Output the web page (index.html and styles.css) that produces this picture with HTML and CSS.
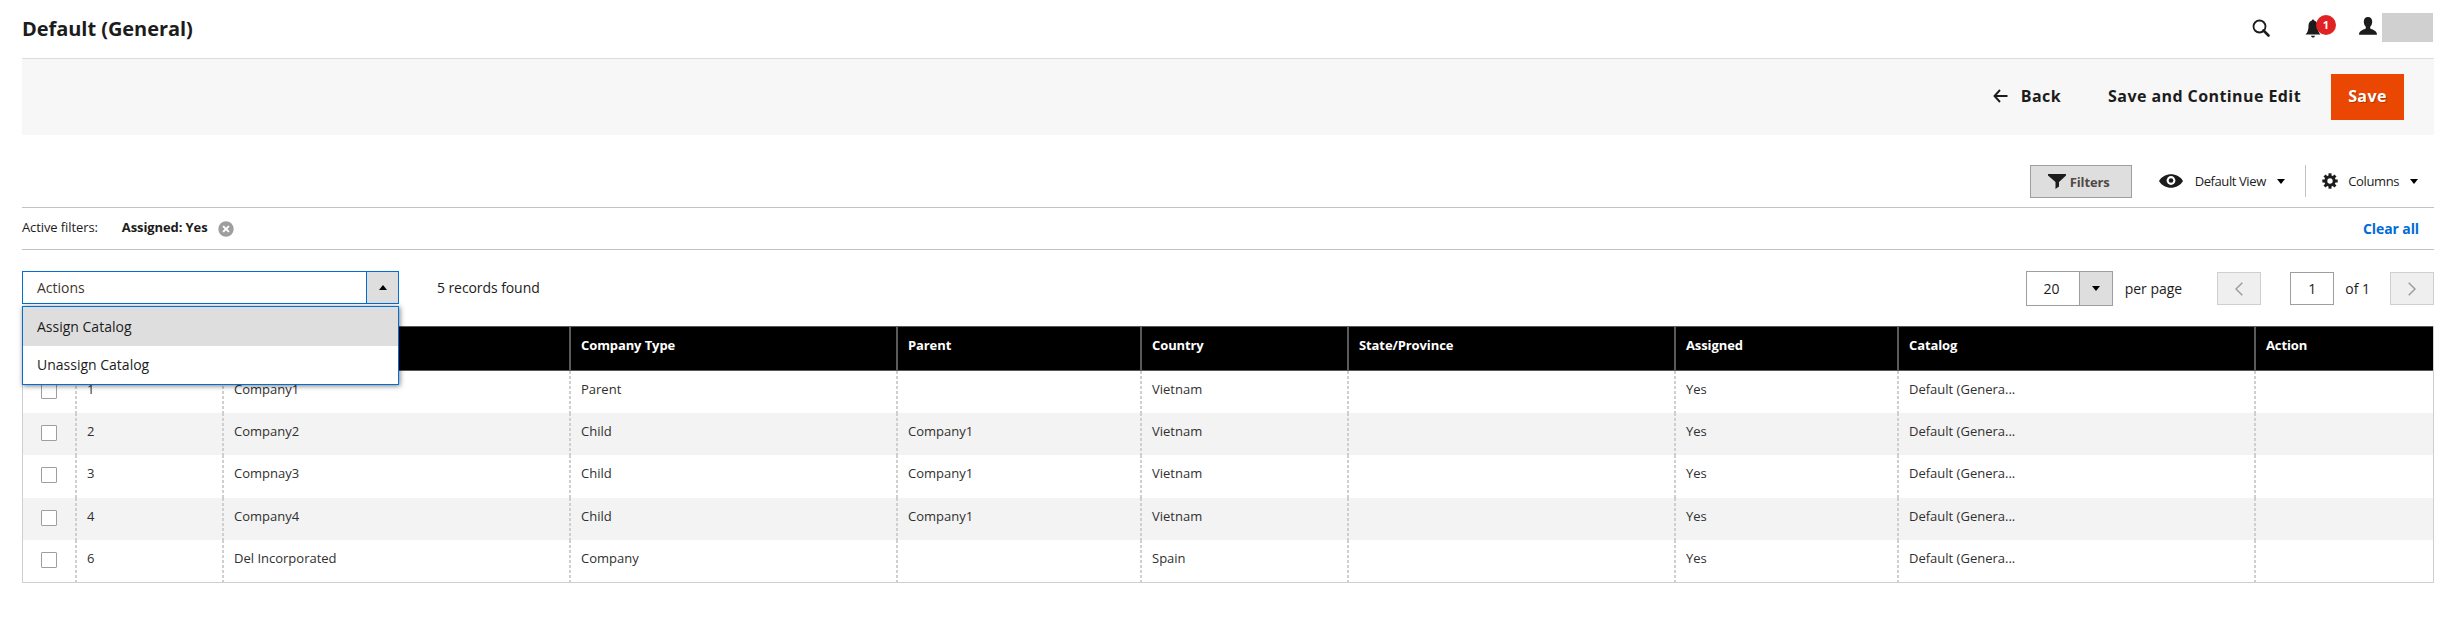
FILE: index.html
```html
<!DOCTYPE html>
<html lang="en">
<head>
<meta charset="utf-8">
<title>Default (General)</title>
<link rel="stylesheet" href="styles.css">
</head>
<body>
<header class="header">
  <h1 class="title">Default (General)</h1>
  <div class="tools">
    <svg class="search" width="18" height="18" viewBox="0 0 18 18"><circle cx="7.5" cy="7.5" r="6" fill="none" stroke="#1c1c1c" stroke-width="1.8"/><path d="M11.5 11.5l5 5" stroke="#1c1c1c" stroke-width="2.6" stroke-linecap="round"/></svg>
    <div class="bell">
      <svg width="16" height="19" viewBox="0 0 16 19"><path d="M8 0.5c.7 0 1.1.5 1.1 1.1C11.500 2.300 12.500 4.300 12.500 7c0 4 1 6.500 3 8.500H.5c2-2 3-4.500 3-8.500 0-2.700 1-4.700 3.400-5.400C6.900 1 7.300.5 8 .5zM6 16.700h4c-.2 1.200-1 1.800-2 1.800s-1.800-.6-2-1.800z" fill="#1c1c1c"/></svg>
      <span class="badge">1</span>
    </div>
    <svg class="user" width="18" height="18" viewBox="0 0 18 18"><path d="M9 0c2.700 0 4.200 1.900 4.200 4.600 0 2.200-.7 4-2 5.200v1.800c1 .8 6.800 1.600 6.800 6.100H0c0-4.500 5.800-5.300 6.800-6.100V9.800c-1.300-1.200-2-3-2-5.200C4.800 1.900 6.300 0 9 0z" fill="#1c1c1c"/></svg>
    <span class="account"></span>
  </div>
</header>
<section class="page-actions">
  <a class="back"><svg width="15" height="14" viewBox="0 0 15 14"><path d="M14.500 7H1.500M7 1L1.500 7 7 13" fill="none" stroke="#1c1c1c" stroke-width="1.900"/></svg>Back</a>
  <a class="continue">Save and Continue Edit</a>
  <button class="save">Save</button>
</section>
<section class="grid-tools">
  <button class="filters"><svg width="18" height="15" viewBox="0 0 18 15"><path d="M0 0h18v1.500L11 8v4.500L7.500 15V8L0 1.500z" fill="#1c1c1c"/></svg>Filters</button>
  <div class="view"><svg width="24" height="14" viewBox="0 0 24 14"><path d="M0 7C5-2 19-2 24 7 19 16 5 16 0 7z" fill="#1c1c1c"/><circle cx="12" cy="6.500" r="4.400" fill="#fff"/><circle cx="12" cy="6.500" r="2.300" fill="#1c1c1c"/></svg><span>Default View</span><i class="caret"></i></div>
  <div class="columns"><svg width="16" height="16" viewBox="-8 -8 16 16"><g fill="#1c1c1c"><path id="t" d="M-1.500-7.700h3v15.400h-3z"/><use href="#t" transform="rotate(45)"/><use href="#t" transform="rotate(90)"/><use href="#t" transform="rotate(135)"/><circle r="5.700"/></g><circle r="2.700" fill="#fff"/></svg><span>Columns</span><i class="caret"></i></div>
</section>
<section class="active-filters">
  <span class="label">Active filters:</span><b>Assigned: Yes</b>
  <svg width="16" height="16" viewBox="0 0 16 16"><circle cx="8" cy="8" r="7.700" fill="#9e9e9e"/><path d="M5.100 5.100l5.800 5.800M10.900 5.100l-5.800 5.800" stroke="#fff" stroke-width="2"/></svg>
  <a class="clear">Clear all</a>
</section>
<section class="controls">
  <div class="actions">
    <div class="select"><span>Actions</span><div class="toggle"><i class="caret up"></i></div></div>
    <ul class="menu"><li class="hover">Assign Catalog</li><li>Unassign Catalog</li></ul>
  </div>
  <span class="records">5 records found</span>
  <div class="pager">
    <div class="limit"><span>20</span><div class="limit-toggle"><i class="caret"></i></div></div>
    <span class="per">per page</span>
    <button class="nav"><svg width="8" height="14" viewBox="0 0 8 14"><path d="M7.300 .7L1 7l6.300 6.300" fill="none" stroke="#9a9a9a" stroke-width="1.400"/></svg></button>
    <div class="page">1</div><span class="of">of 1</span>
    <button class="nav"><svg width="8" height="14" viewBox="0 0 8 14"><path d="M.7 .7L7 7 .7 13.300" fill="none" stroke="#9a9a9a" stroke-width="1.400"/></svg></button>
  </div>
</section>
<table class="data">
  <colgroup><col class="c1"><col class="c2"><col class="c3"><col class="c4"><col class="c5"><col class="c6"><col class="c7"><col class="c8"><col class="c9"><col class="c10"></colgroup>
  <thead><tr><th></th><th></th><th></th><th>Company Type</th><th>Parent</th><th>Country</th><th>State/Province</th><th>Assigned</th><th>Catalog</th><th>Action</th></tr></thead>
  <tbody>
    <tr><td><i class="check"></i></td><td>1</td><td>Company1</td><td>Parent</td><td></td><td>Vietnam</td><td></td><td>Yes</td><td>Default (Genera...</td><td></td></tr>
    <tr><td><i class="check"></i></td><td>2</td><td>Company2</td><td>Child</td><td>Company1</td><td>Vietnam</td><td></td><td>Yes</td><td>Default (Genera...</td><td></td></tr>
    <tr class="tall"><td><i class="check"></i></td><td>3</td><td>Compnay3</td><td>Child</td><td>Company1</td><td>Vietnam</td><td></td><td>Yes</td><td>Default (Genera...</td><td></td></tr>
    <tr><td><i class="check"></i></td><td>4</td><td>Company4</td><td>Child</td><td>Company1</td><td>Vietnam</td><td></td><td>Yes</td><td>Default (Genera...</td><td></td></tr>
    <tr><td><i class="check"></i></td><td>6</td><td>Del Incorporated</td><td>Company</td><td></td><td>Spain</td><td></td><td>Yes</td><td>Default (Genera...</td><td></td></tr>
  </tbody>
</table>
</body>
</html>
```
FILE: styles.css
```css
* { box-sizing: border-box; }
body { margin: 0; padding: 0 19px 0 22px; height: 618px; background: #fff; color: #1c1c1c; font-family: "Open Sans", "Noto Sans", sans-serif; font-size: 14px; overflow: hidden; }
svg { display: block; flex: none; }
button { font: inherit; border-radius: 0; padding: 0; margin: 0; }
.header { height: 59px; border-bottom: 1px solid #dcdcdc; display: flex; justify-content: space-between; }
.title { margin: 0; font-size: 20px; font-weight: 700; letter-spacing: -.05px; line-height: 58px; }
.tools { display: flex; align-items: flex-start; padding-right: 1px; }
.search { margin: 19px 35px 0 0; }
.bell { position: relative; margin: 19px 38px 0 0; }
.badge { position: absolute; left: 11px; top: -4px; width: 20px; height: 20px; border-radius: 50%; background: #e02222; color: #fff; font-size: 11px; font-weight: 700; line-height: 20px; text-align: center; }
.user { margin: 17px 5px 0 0; }
.account { width: 51px; height: 29px; margin-top: 13px; background: #d0d0d0; }
.page-actions { height: 76px; background: #f7f7f7; display: flex; justify-content: flex-end; align-items: center; padding-right: 30px; font-size: 16px; font-weight: 700; letter-spacing: .42px; line-height: 22px; }
.back { display: flex; align-items: center; gap: 13px; margin-right: 47px; padding-bottom: 2px; }
.continue { margin-right: 30px; padding-bottom: 2px; }
.save { width: 73px; height: 46px; padding-bottom: 2px; border: 0; background: #ea4703; color: #fff; letter-spacing: .42px; text-shadow: 1px 1px 0 rgba(0,0,0,.25); }
.grid-tools { height: 73px; border-bottom: 1px solid #c2c2c2; padding: 30px 16px 0 0; display: flex; justify-content: flex-end; }
.filters { width: 102px; height: 33px; border: 1px solid #9e9e9e; background: #dedede; color: #514943; font-weight: 700; font-size: 13px; letter-spacing: -.1px; display: flex; align-items: center; gap: 4px; padding-left: 17px; margin-right: 27px; }
.view, .columns { display: flex; align-items: center; height: 32px; font-size: 13px; letter-spacing: -.4px; }
.view span { margin: 0 11.5px 0 12px; }
.view { padding-right: 20px; border-right: 1px solid #c2c2c2; }
.columns { padding-left: 16px; }
.columns span { margin: 0 11px 0 10px; }
.caret { display: block; border: 4px solid transparent; border-top: 5px solid #000; border-bottom: 0; }
.caret.up { border-top: 0; border-bottom: 5px solid #000; }
.active-filters { height: 42px; border-bottom: 1px solid #c2c2c2; display: flex; align-items: center; font-size: 13px; padding-right: 15px; }
.label, .active-filters b { padding-bottom: 3px; letter-spacing: -.1px; }
.active-filters b { margin: 0 10px 0 24px; font-weight: 700; }
.clear { margin-left: auto; color: #006bd6; font-weight: 700; font-size: 14px; letter-spacing: -.1px; }
.controls { height: 76px; padding-top: 21px; display: flex; align-items: flex-start; }
.actions { position: relative; width: 377px; height: 33px; }
.select { height: 33px; border: 1px solid #006fd6; display: flex; justify-content: space-between; align-items: center; padding-left: 14px; color: #41362f; }
.toggle { width: 32px; height: 31px; background: #dedede; border-left: 1px solid #006fd6; display: flex; align-items: center; justify-content: center; }
.menu { position: absolute; z-index: 2; top: 35px; left: 0; width: 377px; height: 79px; margin: 0; padding: 0; list-style: none; border: 1px solid #006fd6; background: #fff; box-shadow: 1px 1px 5px rgba(0,0,0,.5); }
.menu li { height: 38px; line-height: 38px; padding-left: 14px; }
.menu .hover { height: 39px; line-height: 40px; background: #dedede; }
.records { margin-left: 38px; line-height: 34px; letter-spacing: -.08px; }
.pager { margin-left: auto; display: flex; align-items: center; height: 35px; }
.limit { width: 87px; height: 35px; border: 1px solid #9e9e9e; display: flex; align-items: center; justify-content: space-between; }
.limit span { width: 50px; text-align: center; }
.limit-toggle { width: 33px; height: 33px; border-left: 1px solid #9e9e9e; background: #dedede; display: flex; align-items: center; justify-content: center; }
.per { margin: 0 35px 0 12px; }
.nav { width: 44px; height: 33px; border: 1px solid #cfcfcf; background: #efefef; display: flex; align-items: center; justify-content: center; }
.page { width: 44px; height: 33px; border: 1px solid #9e9e9e; margin-left: 29px; text-align: center; line-height: 31px; }
.of { margin: 0 20px 0 11px; }
.data { width: 2412px; table-layout: fixed; border-collapse: separate; border-spacing: 0; border: solid #cfcfcf; border-width: 0 1px 1px; font-size: 13px; }
.c1 { width: 54px; } .c2 { width: 147px; } .c3 { width: 347px; } .c4 { width: 327px; } .c5 { width: 244px; }
.c6 { width: 207px; } .c7 { width: 327px; } .c8 { width: 223px; } .c9 { width: 357px; }
th, td { padding: 0 10px; text-align: left; vertical-align: top; }
th { height: 45px; background: #000; color: #fff; font-weight: 700; line-height: 37px; letter-spacing: -.1px; border: solid #5a5a5a; border-width: 1px 2px 1px 0; }
td { height: 42px; line-height: 37px; color: #303030; background: repeating-linear-gradient(#cfcfcf 0 3px, transparent 3px 5px) right top / 2px 100% no-repeat; }
th:last-child { border-right: 0; }
td:last-child { background: none; }
.tall td { height: 43px; }
tbody tr:nth-child(even) { background: #f3f3f3; }
.check { display: block; width: 16px; height: 16px; margin: 12px 0 0 8px; border: 1px solid #9e9e9e; border-radius: 1px; background: #fff; }
```
